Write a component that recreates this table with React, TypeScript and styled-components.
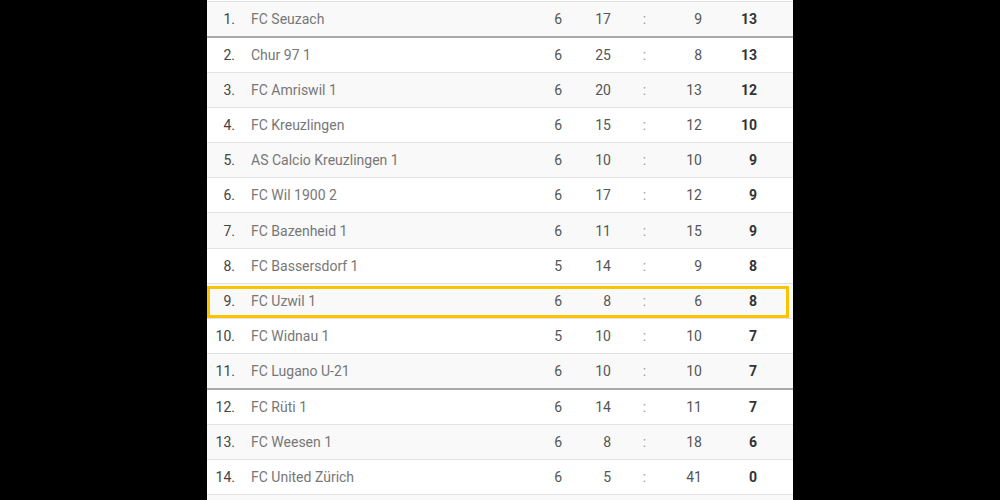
import styled, { createGlobalStyle } from "styled-components";

type Team = {
  rank: number;
  name: string;
  played: number;
  goalsFor: number;
  goalsAgainst: number;
  points: number;
};

const teams: Team[] = [
  { rank: 1, name: "FC Seuzach", played: 6, goalsFor: 17, goalsAgainst: 9, points: 13 },
  { rank: 2, name: "Chur 97 1", played: 6, goalsFor: 25, goalsAgainst: 8, points: 13 },
  { rank: 3, name: "FC Amriswil 1", played: 6, goalsFor: 20, goalsAgainst: 13, points: 12 },
  { rank: 4, name: "FC Kreuzlingen", played: 6, goalsFor: 15, goalsAgainst: 12, points: 10 },
  { rank: 5, name: "AS Calcio Kreuzlingen 1", played: 6, goalsFor: 10, goalsAgainst: 10, points: 9 },
  { rank: 6, name: "FC Wil 1900 2", played: 6, goalsFor: 17, goalsAgainst: 12, points: 9 },
  { rank: 7, name: "FC Bazenheid 1", played: 6, goalsFor: 11, goalsAgainst: 15, points: 9 },
  { rank: 8, name: "FC Bassersdorf 1", played: 5, goalsFor: 14, goalsAgainst: 9, points: 8 },
  { rank: 9, name: "FC Uzwil 1", played: 6, goalsFor: 8, goalsAgainst: 6, points: 8 },
  { rank: 10, name: "FC Widnau 1", played: 5, goalsFor: 10, goalsAgainst: 10, points: 7 },
  { rank: 11, name: "FC Lugano U-21", played: 6, goalsFor: 10, goalsAgainst: 10, points: 7 },
  { rank: 12, name: "FC Rüti 1", played: 6, goalsFor: 14, goalsAgainst: 11, points: 7 },
  { rank: 13, name: "FC Weesen 1", played: 6, goalsFor: 8, goalsAgainst: 18, points: 6 },
  { rank: 14, name: "FC United Zürich", played: 6, goalsFor: 5, goalsAgainst: 41, points: 0 },
];

const HIGHLIGHT_RANK = 9;
// a thick line is drawn above these ranks (promotion / relegation cut)
const CUT_ABOVE = [2, 12];

const App = () => {
  return (
    <>
      <GlobalStyle />
      <Table>
        {teams.map(team => (
          <Row
            key={team.rank}
            $striped={team.rank % 2 === 1}
            $cut={CUT_ABOVE.includes(team.rank)}
            $highlight={team.rank === HIGHLIGHT_RANK}
          >
            <Rank>{team.rank}.</Rank>
            <Name>{team.name}</Name>
            <Num>{team.played}</Num>
            <Num>{team.goalsFor}</Num>
            <Colon>:</Colon>
            <Num>{team.goalsAgainst}</Num>
            <Points>{team.points}</Points>
          </Row>
        ))}
        <Row $striped $cut={false} $highlight={false} />
      </Table>
    </>
  );
};

export default App;

const GlobalStyle = createGlobalStyle`
  html, body {
    margin: 0;
    padding: 0;
    background: #000;
    overflow: hidden;
  }
  body {
    font-family: Roboto, "Liberation Sans", Arial, sans-serif;
    font-size: 14px;
  }
`;

const Table = styled.div`
  width: 586px;
  margin: 0 auto;
  padding-top: 1px;
  background: #fff;
`;

const Row = styled.div<{ $striped: boolean; $cut: boolean; $highlight: boolean }>`
  position: relative;
  display: grid;
  grid-template-columns: 28px 1fr 35px 49px 67px 24px 55px;
  align-items: center;
  height: 34.08px;
  padding-right: 36px;
  background: ${p => (p.$striped ? "#f9f9f9" : "#fff")};
  border-top: ${p => (p.$cut ? "2px solid #aaa" : "1px solid #e3e3e3")};

  &::after {
    content: "";
    display: ${p => (p.$highlight ? "block" : "none")};
    position: absolute;
    top: 2px;
    left: 0;
    right: 4px;
    bottom: 0;
    border: 3px solid #fcc400;
    pointer-events: none;
  }
`;

const Rank = styled.div`
  text-align: right;
  color: #444;
`;

const Name = styled.div`
  padding-left: 16px;
  color: #777;
  white-space: nowrap;
`;

const Num = styled.div`
  text-align: right;
  color: #555;
`;

const Colon = styled.div`
  text-align: center;
  color: #999;
`;

const Points = styled.div`
  text-align: right;
  color: #333;
  font-weight: bold;
`;
